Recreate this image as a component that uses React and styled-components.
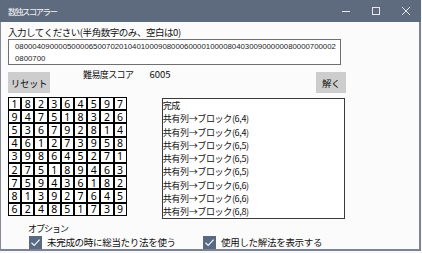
import React from 'react'
import styled, { createGlobalStyle } from 'styled-components'

const puzzle = '080004090000500006500702010401000908000600001000080403009000000800007000020800700'

const solution = [
  '182364597',
  '947518326',
  '536792814',
  '461273958',
  '398645271',
  '275189463',
  '759436182',
  '813927645',
  '624851739',
]

const steps = [
  '完成',
  '共有列→ブロック(6,4)',
  '共有列→ブロック(6,4)',
  '共有列→ブロック(6,5)',
  '共有列→ブロック(6,5)',
  '共有列→ブロック(6,5)',
  '共有列→ブロック(6,6)',
  '共有列→ブロック(6,6)',
  '共有列→ブロック(6,8)',
]

const App = () => {
  return (
    <>
      <GlobalStyle />
      <Window>
        <TitleBar>
          <Title>数独スコアラー</Title>
          <Controls>
            <ControlButton>
              <svg width="10" height="10" viewBox="0 0 10 10">
                <line x1="1" y1="5.5" x2="9" y2="5.5" stroke="#e4e8ee" strokeWidth="1" />
              </svg>
            </ControlButton>
            <ControlButton>
              <svg width="10" height="10" viewBox="0 0 10 10">
                <rect x="1.5" y="1.5" width="7" height="7" fill="none" stroke="#e4e8ee" strokeWidth="1" />
              </svg>
            </ControlButton>
            <ControlButton>
              <svg width="10" height="10" viewBox="0 0 10 10">
                <path d="M1 1 L9 9 M9 1 L1 9" stroke="#e4e8ee" strokeWidth="1" />
              </svg>
            </ControlButton>
          </Controls>
        </TitleBar>
        <Frame>
          <InputLabel>入力してください(半角数字のみ、空白は0)</InputLabel>
          <TextBox>{puzzle}</TextBox>
          <Toolbar>
            <Button $width={42}>リセット</Button>
            <Score>
              難易度スコア<ScoreValue>6005</ScoreValue>
            </Score>
            <SolveButton $width={30}>解く</SolveButton>
          </Toolbar>
          <MainRow>
            <Board>
              {solution.map((row, r) =>
                row.split('').map((d, c) => <Cell key={r + '-' + c}>{d}</Cell>)
              )}
            </Board>
            <ListBox>
              {steps.map((s, i) => (
                <ListItem key={i}>{s}</ListItem>
              ))}
            </ListBox>
          </MainRow>
          <Options>
            <OptionsTitle>オプション</OptionsTitle>
            <CheckRow>
              <CheckItem $width={173}>
                <CheckBox>
                  <svg width="13" height="13" viewBox="0 0 13 13">
                    <polyline points="2.5,6.8 5.2,9.4 10.6,3.6" fill="none" stroke="#f4f6f9" strokeWidth="1.2" />
                  </svg>
                </CheckBox>
                <CheckLabel>未完成の時に総当たり法を使う</CheckLabel>
              </CheckItem>
              <CheckItem>
                <CheckBox>
                  <svg width="13" height="13" viewBox="0 0 13 13">
                    <polyline points="2.5,6.8 5.2,9.4 10.6,3.6" fill="none" stroke="#f4f6f9" strokeWidth="1.2" />
                  </svg>
                </CheckBox>
                <CheckLabel>使用した解法を表示する</CheckLabel>
              </CheckItem>
            </CheckRow>
          </Options>
        </Frame>
      </Window>
    </>
  )
}

export default App

const GlobalStyle = createGlobalStyle`
    body {
        margin: 0;
        background: #f6f7f9;
        font-family: "Noto Sans CJK JP", sans-serif;
        color: #111;
    }
`

const Window = styled.div`
    width: 421px;
    display: flex;
    flex-direction: column;
`

const TitleBar = styled.div`
    height: 22px;
    background: #5e6a7e;
    display: flex;
    align-items: center;
    padding-left: 8px;
`

const Title = styled.div`
    color: #f2f4f7;
    font-size: 8.5px;
    letter-spacing: -1.6px;
    line-height: 22px;
`

const Controls = styled.div`
    margin-left: auto;
    display: flex;
    height: 22px;
`

const ControlButton = styled.div`
    width: 30px;
    height: 22px;
    display: flex;
    align-items: center;
    justify-content: center;
`

const Frame = styled.div`
    height: 227px;
    background: #fbfbfb;
    border-left: 1px solid #868b96;
    border-right: 2px solid #7d8390;
    border-bottom: 2px solid #7d8390;
    padding-left: 7px;
    display: flex;
    flex-direction: column;
`

const InputLabel = styled.div`
    margin-top: 4px;
    font-size: 9.5px;
    letter-spacing: -0.45px;
    line-height: 13px;
    color: #111;
`

const TextBox = styled.div`
    width: 323px;
    height: 24px;
    border: 1px solid #6f6f6f;
    background: #fff;
    padding: 1px 2px 0 6px;
    font-family: "Liberation Sans", Arial, sans-serif;
    font-size: 7.8px;
    line-height: 11.5px;
    word-break: break-all;
    color: #222;
`

const Toolbar = styled.div`
    width: 338px;
    margin-top: 7px;
    display: flex;
    align-items: center;
    height: 21px;
`

const Button = styled.div`
    width: ${p => p.$width}px;
    height: 21px;
    background: #cdcdcd;
    display: flex;
    align-items: center;
    justify-content: center;
    font-size: 9.5px;
    letter-spacing: -0.4px;
    color: #111;
`

const SolveButton = styled(Button)`
    margin-left: auto;
`

const Score = styled.div`
    margin-left: 33px;
    align-self: flex-start;
    margin-top: -4px;
    font-size: 9px;
    letter-spacing: -0.6px;
    line-height: 13px;
`

const ScoreValue = styled.span`
    margin-left: 16px;
    font-size: 9.5px;
    letter-spacing: 0;
`

const MainRow = styled.div`
    margin-top: 4px;
    display: flex;
    align-items: flex-start;
    height: 122px;
`

const Board = styled.div`
    display: grid;
    grid-template-columns: repeat(9, 13.2px);
    grid-auto-rows: 13.2px;
`

const Cell = styled.div`
    border: 1px solid #000;
    background: #fff;
    display: flex;
    align-items: center;
    justify-content: center;
    font-family: "Noto Sans", sans-serif;
    font-size: 10.5px;
    color: #000;
`

const ListBox = styled.div`
    margin-left: 35px;
    margin-top: 1px;
    width: 181px;
    height: 119px;
    border: 1px solid #3a3a3a;
    background: #fff;
    overflow: hidden;
`

const ListItem = styled.div`
    font-size: 9px;
    letter-spacing: -0.35px;
    line-height: 13.25px;
    height: 13.25px;
    white-space: nowrap;
    color: #111;
`

const Options = styled.div`
    padding-left: 20px;
    margin-top: 3px;
`

const OptionsTitle = styled.div`
    font-size: 9px;
    letter-spacing: -1px;
    line-height: 13px;
`

const CheckRow = styled.div`
    display: flex;
    margin-top: 1px;
`

const CheckItem = styled.div`
    display: flex;
    align-items: center;
    width: ${p => (p.$width ? p.$width + 'px' : 'auto')};
    padding-left: 1px;
`

const CheckBox = styled.div`
    width: 13px;
    height: 13px;
    background: #5a6982;
    display: flex;
`

const CheckLabel = styled.span`
    margin-left: 5px;
    font-size: 9.5px;
    letter-spacing: -0.3px;
    line-height: 13px;
`
